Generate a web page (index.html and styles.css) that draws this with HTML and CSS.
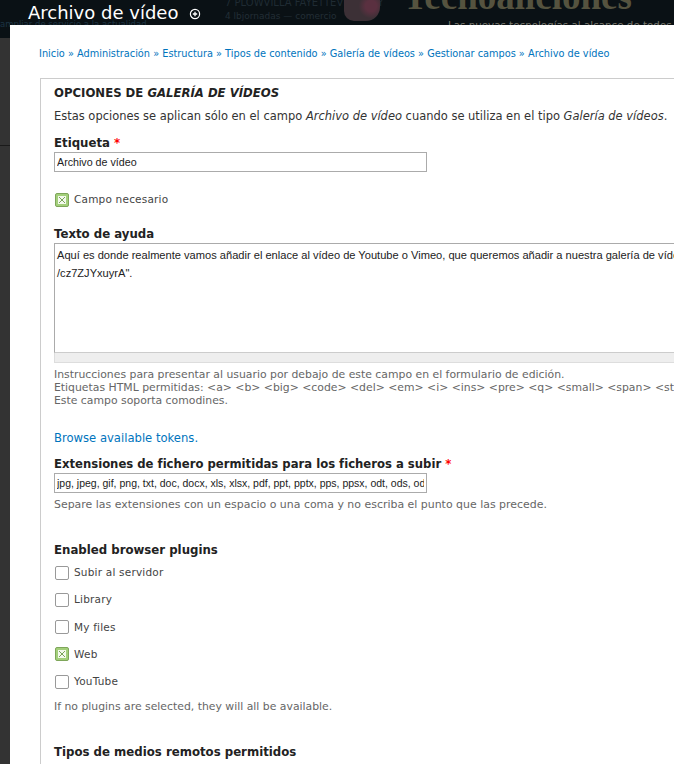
FILE: index.html
```html
<!DOCTYPE html>
<html lang="es">
<head>
<meta charset="utf-8">
<title>Archivo de vídeo</title>
<link rel="stylesheet" href="styles.css">
</head>
<body>
<div class="backdrop" aria-hidden="true">
  <span class="bg-small">ampliar de servicio a la actualidad</span>
  <span class="bg-news">7 PLOWVILLA FAYETTEVILLE, NY</span>
  <span class="bg-time">4 lbjornadas — comercio</span>
  <span class="bg-flag"></span>
  <span class="bg-logo">Techoaliciones</span>
  <span class="bg-tag">Las nuevas tecnologías al alcance de todos</span>
</div>
<div class="side-line"></div>
<header class="titlebar">
  <h1>Archivo de vídeo</h1>
  <svg class="plus" viewBox="0 0 12 12" width="12" height="12"><circle cx="6" cy="6" r="4.6" fill="none" stroke="#fff" stroke-width="1.2"/><path d="M3.8 6h4.4M6 3.8v4.4" stroke="#fff" stroke-width="1.3"/></svg>
</header>
<main class="panel">
  <nav class="crumbs">
    <a href="#">Inicio</a> » <a href="#">Administración</a> » <a href="#">Estructura</a> » <a href="#">Tipos de contenido</a> » <a href="#">Galería de vídeos</a> » <a href="#">Gestionar campos</a> » <a href="#">Archivo de vídeo</a>
  </nav>
  <section class="fieldset">
    <h2>OPCIONES DE <em>GALERÍA DE VÍDEOS</em></h2>
    <p class="intro">Estas opciones se aplican sólo en el campo <em>Archivo de vídeo</em> cuando se utiliza en el tipo <em>Galería de vídeos</em>.</p>

    <label class="lbl lbl-first">Etiqueta <span class="req">*</span></label>
    <input class="text text-first" type="text" value="Archivo de vídeo">

    <label class="check check-required"><input type="checkbox" checked> Campo necesario</label>

    <label class="lbl lbl-help">Texto de ayuda</label>
    <div class="area">
      <textarea wrap="off" spellcheck="false">Aquí es donde realmente vamos añadir el enlace al vídeo de Youtube o Vimeo, que queremos añadir a nuestra galería de vídeos. Por ejemplo: "http://youtu.be
/cz7ZJYxuyrA".</textarea>
      <div class="grip"></div>
    </div>
    <div class="desc desc-help">
      Instrucciones para presentar al usuario por debajo de este campo en el formulario de edición.<br>
      Etiquetas HTML permitidas: &lt;a&gt; &lt;b&gt; &lt;big&gt; &lt;code&gt; &lt;del&gt; &lt;em&gt; &lt;i&gt; &lt;ins&gt; &lt;pre&gt; &lt;q&gt; &lt;small&gt; &lt;span&gt; &lt;strong&gt; &lt;sub&gt; &lt;sup&gt;<br>
      Este campo soporta comodines.
    </div>
    <a class="tokens" href="#">Browse available tokens.</a>

    <label class="lbl lbl-ext">Extensiones de fichero permitidas para los ficheros a subir <span class="req">*</span></label>
    <input class="text text-ext" type="text" value="jpg, jpeg, gif, png, txt, doc, docx, xls, xlsx, pdf, ppt, pptx, pps, ppsx, odt, ods, odp, mp3, mov">
    <div class="desc desc-ext">Separe las extensiones con un espacio o una coma y no escriba el punto que las precede.</div>

    <div class="lbl lbl-plugins">Enabled browser plugins</div>
    <div class="checks">
      <label class="check"><input type="checkbox"> Subir al servidor</label>
      <label class="check"><input type="checkbox"> Library</label>
      <label class="check"><input type="checkbox"> My files</label>
      <label class="check"><input type="checkbox" checked> Web</label>
      <label class="check"><input type="checkbox"> YouTube</label>
    </div>
    <div class="desc desc-plugins">If no plugins are selected, they will all be available.</div>

    <div class="lbl lbl-media">Tipos de medios remotos permitidos</div>
  </section>
</main>
</body>
</html>
```
FILE: styles.css
```css
html, body {
  margin: 0;
  height: 764px;
  overflow: hidden;
}
body {
  position: relative;
  background: #333;
  font-family: "DejaVu Sans", sans-serif;
  color: #333;
}
.backdrop {
  position: absolute;
  left: 0;
  top: 0;
  width: 674px;
  height: 38px;
  overflow: hidden;
  background: #0a1115;
  white-space: nowrap;
}
.backdrop span { position: absolute; }
.side-line {
  position: absolute;
  left: 0;
  top: 145px;
  width: 10px;
  height: 1px;
  background: #1a1a1a;
}
.bg-small { left: 0; top: 19px; font-size: 8.5px; color: #1c3444; }
.bg-news { left: 225px; top: -3px; font-size: 10px; color: #1f2b33; }
.bg-time { left: 225px; top: 11px; font-size: 9px; color: #222e35; }
.bg-flag {
  left: 344px;
  top: -2px;
  width: 36px;
  height: 23px;
  background: radial-gradient(circle at 75% 35%, #5a3040 0 18%, #3c3036 40%);
  border-radius: 0 0 14px 10px;
}
.bg-logo { left: 403px; top: -25px; font: bold 37px "Liberation Serif", serif; color: #55533f; }
.bg-tag { left: 448px; top: 19px; font-size: 10.3px; color: #77776e; }
.titlebar {
  position: relative;
  display: flex;
  align-items: center;
  height: 25px;
  padding-left: 28px;
  color: #fff;
}
.titlebar h1 {
  margin: 0;
  font-size: 18px;
  font-weight: normal;
  line-height: 22px;
}
.plus { margin: 2px 0 0 11px; }
.panel {
  position: relative;
  margin-left: 10px;
  height: 739px;
  background: #fff;
  padding: 22px 0 0 30px;
  box-sizing: border-box;
  overflow: hidden;
}
.crumbs {
  margin-left: -1px;
  font-size: 9.78px;
  line-height: 13px;
  color: #0074bd;
  white-space: nowrap;
}
.panel a { color: #0074bd; text-decoration: none; }
.fieldset {
  width: 700px;
  margin-top: 18px;
  border: 1px solid #ccc;
  border-width: 1px 0 0 1px;
  padding: 7px 0 0 13px;
  height: 700px;
  font-size: 11px;
}
h2 {
  margin: 0;
  font-size: 11.7px;
  line-height: 14px;
  font-weight: bold;
  color: #222;
}
.intro {
  margin: 9px 0 0;
  font-size: 11.48px;
  line-height: 15px;
  white-space: nowrap;
}
.lbl {
  display: block;
  font-size: 11.75px;
  line-height: 15px;
  font-weight: bold;
  color: #222;
}
.lbl-first { margin-top: 12px; }
.req { color: #f00; }
.text {
  display: block;
  box-sizing: border-box;
  width: 373px;
  height: 20px;
  padding: 0 2px;
  border: 1px solid #ababab;
  font: 10.7px "Liberation Sans", sans-serif;
  color: #222;
  background: #fff;
}
.text-first { margin: 1px 0 0; }
.text-ext { margin: 1px 0 0; font-size: 10.5px; }
.check {
  display: flex;
  align-items: center;
  gap: 5px;
  height: 15px;
  line-height: 15px;
  font-size: 10.5px;
  color: #444;
  letter-spacing: .2px;
}
.check input {
  appearance: none;
  -webkit-appearance: none;
  box-sizing: border-box;
  width: 14px;
  height: 14px;
  margin: 0 0 0 1px;
  border: 1px solid #999;
  border-radius: 2px;
  background: #fff;
  flex: none;
}
.check input:checked {
  border-color: #7ea65a;
  background:
    linear-gradient(45deg, transparent 42%, #7aa35a 42%, #7aa35a 58%, transparent 58%) center / 6px 6px no-repeat,
    linear-gradient(-45deg, transparent 42%, #7aa35a 42%, #7aa35a 58%, transparent 58%) center / 6px 6px no-repeat,
    linear-gradient(#f4f9ee, #f4f9ee) center / 8px 8px no-repeat,
    #a3cf7b;
}
.check-required { margin-top: 20px; }
.lbl-help { margin-top: 20px; }
.area { width: 700px; margin-top: 1px; }
textarea {
  display: block;
  box-sizing: border-box;
  width: 100%;
  height: 110px;
  margin: 0;
  padding: 2px 2px 0;
  border: 1px solid #ababab;
  border-bottom-color: #ccc;
  font: 11.1px/18px "Liberation Sans", sans-serif;
  color: #222;
  resize: none;
  overflow: hidden;
}
.grip {
  height: 10px;
  background: #eee;
  border: 1px solid #ddd;
  border-top: 0;
  box-sizing: border-box;
}
.desc {
  font-size: 10.85px;
  line-height: 16px;
  color: #666;
  white-space: nowrap;
}
.desc-help { margin-top: 5px; line-height: 13px; }
.tokens {
  display: block;
  margin-top: 24px;
  font-size: 11.6px;
  line-height: 15px;
}
.lbl-ext { margin-top: 11px; }
.lbl.lbl-ext { font-size: 11.65px; }
.desc-ext { margin-top: 4px; font-size: 10.95px; }
.lbl-plugins { margin-top: 30px; }
.checks {
  display: flex;
  flex-direction: column;
  gap: 12.25px;
  margin-top: 7px;
}
.desc-plugins { margin-top: 10px; }
.lbl-media { margin-top: 30px; }
```
